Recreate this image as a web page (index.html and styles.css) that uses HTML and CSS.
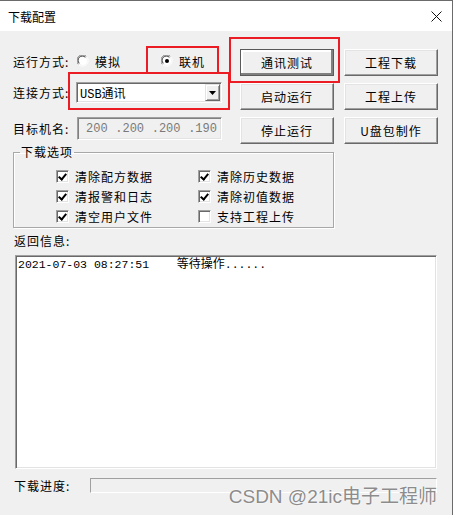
FILE: index.html
```
<!DOCTYPE html>
<html lang="zh-CN">
  <head>
    <meta charset="UTF-8" />
    <meta name="viewport" content="width=device-width, initial-scale=1.0" />
    <title>下载配置</title>
    <link rel="stylesheet" href="styles.css">
  </head>
  <body>
    <div class="win">
      <!-- 타이틀바 -->
      <div class="titlebar">
        <span class="ttl">下载配置</span>
        <svg class="close" width="11" height="11" viewBox="0 0 11 11">
          <path d="M0.5 0.5 L10.5 10.5 M10.5 0.5 L0.5 10.5" stroke="#111" stroke-width="1" fill="none"/>
        </svg>
      </div>

      <div class="body">
        <div class="top">
          <!-- 왼쪽 설정 -->
          <div class="form">
            <div class="row r1">
              <span class="lab">运行方式:</span>
              <span class="radio">
                <svg width="12" height="12" viewBox="0 0 12 12">
                  <path d="M1.5 9.5 A5 5 0 0 1 9.5 1.5" stroke="#808080" fill="none"/>
                  <path d="M9.5 1.5 A5 5 0 0 1 1.5 9.5" stroke="#fff" fill="none"/>
                  <circle cx="6" cy="6" r="4" fill="#fff"/>
                  <path d="M2.3 8.3 A4 4 0 0 1 8.3 2.3" stroke="#404040" fill="none"/>
                </svg>
                模拟
              </span>
              <span class="radio on">
                <svg width="12" height="12" viewBox="0 0 12 12">
                  <path d="M1.5 9.5 A5 5 0 0 1 9.5 1.5" stroke="#808080" fill="none"/>
                  <path d="M9.5 1.5 A5 5 0 0 1 1.5 9.5" stroke="#fff" fill="none"/>
                  <circle cx="6" cy="6" r="4" fill="#fff"/>
                  <path d="M2.3 8.3 A4 4 0 0 1 8.3 2.3" stroke="#404040" fill="none"/>
                  <circle cx="6" cy="6" r="2" fill="#000"/>
                </svg>
                联机
              </span>
            </div>
            <div class="row r2">
              <span class="lab">连接方式:</span>
              <div class="combo">
                <span class="cval">USB通讯</span>
                <span class="drop">
                  <svg width="7" height="4" viewBox="0 0 7 4"><path d="M0 0 H7 L3.5 4 Z" fill="#000"/></svg>
                </span>
              </div>
            </div>
            <div class="row r3">
              <span class="lab">目标机名:</span>
              <div class="ip">
                <span>200</span><span>.200</span><span>.200</span><span>.190</span>
              </div>
            </div>
          </div>
          <!-- 오른쪽 버튼 -->
          <div class="btns">
            <button class="btn def">通讯测试</button>
            <button class="btn">工程下载</button>
            <button class="btn">启动运行</button>
            <button class="btn">工程上传</button>
            <button class="btn">停止运行</button>
            <button class="btn">U盘包制作</button>
          </div>
        </div>

        <!-- 다운로드 옵션 -->
        <fieldset class="grp">
          <legend>下载选项</legend>
          <div class="chks">
            <label class="chk"><i class="box on"></i>清除配方数据</label>
            <label class="chk"><i class="box on"></i>清除历史数据</label>
            <label class="chk"><i class="box on"></i>清报警和日志</label>
            <label class="chk"><i class="box on"></i>清除初值数据</label>
            <label class="chk"><i class="box on"></i>清空用户文件</label>
            <label class="chk"><i class="box"></i>支持工程上传</label>
          </div>
        </fieldset>

        <div class="ret">返回信息:</div>
        <div class="log"><span class="mono">2021-07-03 08:27:51    </span>等待操作<span class="mono">......</span></div>

        <div class="prog">
          <span class="plab">下载进度:</span>
          <div class="bar"></div>
        </div>
      </div>

      <!-- 빨간 강조 박스 -->
      <div class="mark m1"></div>
      <div class="mark m2"></div>
      <div class="mark m3"></div>

      <div class="wm">CSDN @21ic电子工程师</div>
    </div>
  </body>
</html>
```

FILE: styles.css
```
html,
body {
  margin: 0;
  padding: 0;
}
body {
  background: #f0f0f0;
  font-family: "Noto Sans CJK SC", "Liberation Sans", sans-serif;
  font-size: 12px;
  color: #000;
}

/* 창 */
.win {
  position: relative;
  width: 453px;
  height: 515px;
  box-sizing: border-box;
  border-top: 1px solid #6b6b6b;
  border-right: 1px solid #6b6b6b;
  overflow: hidden;
}
.titlebar {
  display: flex;
  align-items: center;
  justify-content: space-between;
  height: 30px;
  padding: 0 10px 0 8px;
  background: #fff;
}
.ttl {
  font-size: 12px;
  letter-spacing: 0;
}
.close {
  margin-top: 1px;
}

.body {
  background: #f0f0f0;
  height: 484px;
  letter-spacing: 1px;
}

/* 상단 */
.top {
  display: flex;
  padding: 18px 0 0 13px;
}
.form {
  width: 227px;
  padding-top: 2px;
}
.row {
  display: flex;
  align-items: center;
}
.r1 {
  height: 20px;
}
.r2 {
  height: 21px;
  margin-top: 11px;
}
.r3 {
  height: 23px;
  margin-top: 14px;
}
.lab {
  width: 64px;
  flex: none;
  white-space: nowrap;
}
.radio {
  display: flex;
  align-items: center;
  gap: 6px;
}
.radio.on {
  margin-left: 40px;
}
.radio svg {
  display: block;
}

/* 콤보박스 */
.combo {
  display: flex;
  align-items: center;
  justify-content: space-between;
  width: 146px;
  height: 21px;
  box-sizing: border-box;
  margin-left: -1px;
  border: 1px solid;
  border-color: #a0a0a0 #fff #fff #a0a0a0;
  box-shadow: inset 1px 1px 0 #696969, inset -1px -1px 0 #e3e3e3;
  background: #fff;
  padding: 0 1px 0 3px;
}
.cval {
  font-family: "Liberation Mono", "Noto Sans CJK SC", monospace;
  font-size: 12px;
  letter-spacing: 0;
}
.drop {
  display: flex;
  align-items: center;
  justify-content: center;
  width: 15px;
  height: 17px;
  box-sizing: border-box;
  background: #f0f0f0;
  border: 1px solid;
  border-color: #e3e3e3 #696969 #696969 #e3e3e3;
  box-shadow: inset 1px 1px 0 #fff, inset -1px -1px 0 #a0a0a0;
}
.drop svg {
  display: block;
}

/* IP 입력 */
.ip {
  display: flex;
  justify-content: space-between;
  align-items: center;
  width: 145px;
  height: 23px;
  box-sizing: border-box;
  padding: 0 4px 0 8px;
  border: 1px solid;
  border-color: #a0a0a0 #fff #fff #a0a0a0;
  box-shadow: inset 1px 1px 0 #808080, inset -1px -1px 0 #e3e3e3;
  color: #7a7a7a;
  font-family: "Liberation Mono", monospace;
  font-size: 12px;
  letter-spacing: 0;
}

/* 버튼 */
.btns {
  display: grid;
  grid-template-columns: 94px 94px;
  grid-auto-rows: 27px;
  column-gap: 10px;
  row-gap: 7px;
}
.btn {
  margin: 0;
  padding: 0;
  font: inherit;
  letter-spacing: 1px;
  color: #000;
  background: #f0f0f0;
  border: 1px solid;
  border-color: #fff #696969 #696969 #fff;
  box-shadow: inset -1px -1px 0 #a0a0a0, inset 1px 1px 0 #e3e3e3;
}
.btn.def {
  outline: 1px solid #5a5a5a;
  outline-offset: -1px;
  box-shadow: inset -2px -2px 0 #808080, inset 2px 2px 0 #fff;
}

/* 그룹박스 */
.grp {
  margin: 1px 0 0 13px;
  width: 321px;
  box-sizing: border-box;
  padding: 7px 0 1px 6px;
  border: 1px solid #a8a8a8;
  box-shadow: 1px 1px 0 #fff, inset 1px 1px 0 #fff;
}
.grp legend {
  padding: 0 1px;
  line-height: 14px;
  height: 14px;
}
.chks {
  display: grid;
  grid-template-columns: 142px auto;
  grid-auto-rows: 20px;
  margin-left: 36px;
}
.chk {
  display: flex;
  align-items: center;
  gap: 6px;
  white-space: nowrap;
}
.box {
  position: relative;
  width: 13px;
  height: 13px;
  box-sizing: border-box;
  flex: none;
  background: #fff;
  border: 1px solid;
  border-color: #a0a0a0 #fff #fff #a0a0a0;
  box-shadow: inset 1px 1px 0 #696969, inset -1px -1px 0 #e3e3e3;
}
.box.on::after {
  content: "";
  position: absolute;
  left: 3px;
  top: 1px;
  width: 3px;
  height: 6px;
  border: solid #000;
  border-width: 0 2px 2px 0;
  transform: rotate(40deg);
}

/* 반환정보 */
.ret {
  margin: 5px 0 0 14px;
  line-height: 16px;
}
.log {
  margin: 6px 0 0 15px;
  width: 422px;
  height: 214px;
  box-sizing: border-box;
  padding: 0 2px;
  background: #fff;
  border: 1px solid;
  border-color: #a0a0a0 #fff #fff #a0a0a0;
  box-shadow: inset 1px 1px 0 #696969, inset -1px -1px 0 #e3e3e3;
  line-height: 14px;
  letter-spacing: 0;
}
.mono {
  font-family: "Liberation Mono", monospace;
  font-size: 11.5px;
  white-space: pre;
}

/* 진행바 */
.prog {
  display: flex;
  align-items: center;
  margin: 9px 0 0 14px;
  height: 15px;
}
.plab {
  width: 76px;
  flex: none;
}
.bar {
  width: 347px;
  height: 15px;
  box-sizing: border-box;
  border: 1px solid;
  border-color: #a0a0a0 #fff #fff #a0a0a0;
  background: #f0f0f0;
}

/* 빨간 강조 */
.mark {
  position: absolute;
  border: 2px solid #ec1c24;
  box-sizing: border-box;
}
.m1 {
  left: 146px;
  top: 45px;
  width: 73px;
  height: 28px;
}
.m2 {
  left: 68px;
  top: 71px;
  width: 162px;
  height: 38px;
}
.m3 {
  left: 229px;
  top: 36px;
  width: 111px;
  height: 46px;
}

/* 워터마크 */
.wm {
  position: absolute;
  right: 15px;
  top: 484px;
  font-family: "Liberation Sans", "Noto Sans CJK SC", sans-serif;
  font-size: 19px;
  line-height: 24px;
  color: #8c8c8c;
  text-shadow: 0 0 2px #fff, 0 0 1px #fff;
  white-space: nowrap;
}
```
